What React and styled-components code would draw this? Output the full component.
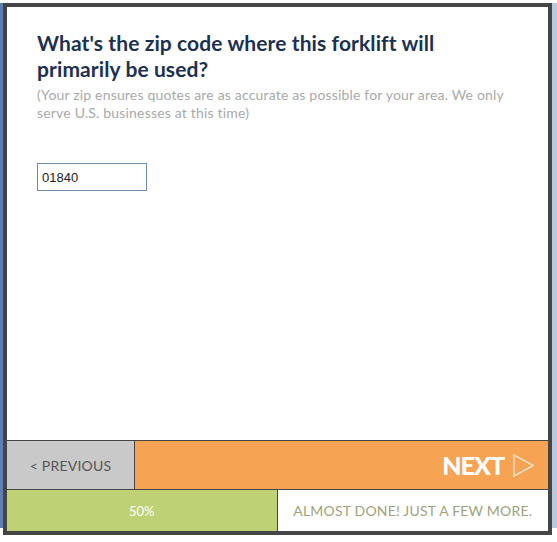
import React from "react";
import styled, { createGlobalStyle } from "styled-components";

const Global = createGlobalStyle`
  html, body { margin: 0; padding: 0; background: #ffffff; }
  body { font-family: "Lato", "Open Sans", sans-serif; }
  * { box-sizing: border-box; }
`;

const Backdrop = styled.div`
  width: 557px;
  height: 542px;
  padding: 3px 5px 7px 3px;
  background:
    linear-gradient(to bottom, #ffffff 0 3px, transparent 3px calc(100% - 14px), #ffffff calc(100% - 14px)),
    linear-gradient(to right, #5d80b0 0 3px, #ffffff 3px calc(100% - 5px), #b9c9de calc(100% - 5px));
`;

const Dialog = styled.div`
  width: 549px;
  height: 532px;
  border: 4px solid #454545;
  background: #ffffff;
  display: flex;
  flex-direction: column;
`;

const Content = styled.div`
  flex: 1;
  padding: 23px 30px 0 30px;
`;

const Title = styled.h1`
  margin: 0;
  max-width: 420px;
  font-family: "Lato", sans-serif;
  font-weight: 700;
  font-size: 21px;
  line-height: 26px;
  letter-spacing: 0.1px;
  color: #1c3152;
`;

const Sub = styled.p`
  margin: 4px 0 0;
  font-family: "Lato", sans-serif;
  font-size: 14px;
  line-height: 18px;
  letter-spacing: 0.18px;
  color: #a9a9a9;
`;

const Input = styled.input`
  display: block;
  margin-top: 41px;
  width: 110px;
  height: 28px;
  border: 1px solid #6d8cae;
  padding: 0 4px;
  font-family: "Liberation Sans", Arial, sans-serif;
  font-size: 13px;
  color: #222;
  outline: none;
`;

const NavRow = styled.div`
  display: flex;
  height: 50px;
  border-top: 1px solid #454545;
  border-bottom: 1px solid #454545;
`;

const PrevButton = styled.button`
  width: 128px;
  border: none;
  border-right: 1px solid #454545;
  background: #c9c9c9;
  color: #555;
  font-family: "Lato", sans-serif;
  font-size: 14px;
  letter-spacing: 0.2px;
  cursor: pointer;
  padding: 0;
`;

const NextButton = styled.button`
  flex: 1;
  border: none;
  background: #f6a354;
  color: #ffffff;
  display: flex;
  align-items: center;
  justify-content: flex-end;
  gap: 9px;
  padding: 0 14px 0 0;
  font-family: "Lato", sans-serif;
  font-weight: 900;
  font-size: 25px;
  letter-spacing: -1px;
  cursor: pointer;
`;

const ProgressRow = styled.div`
  display: flex;
  height: 41px;
`;

const Bar = styled.div`
  background: #bed275;
  border-right: 1px solid #454545;
  color: #ffffff;
  font-family: "Lato", sans-serif;
  font-size: 13px;
  display: flex;
  align-items: center;
  justify-content: center;
`;

const Remaining = styled.div`
  flex: 1;
  color: #9ea37c;
  font-family: "Lato", sans-serif;
  font-size: 14px;
  letter-spacing: 0.2px;
  display: flex;
  align-items: center;
  justify-content: center;
`;

export default function App() {
  const pct = 50;
  return (
    <>
      <Global />
      <Backdrop>
        <Dialog>
          <Content>
            <Title>What's the zip code where this forklift will primarily be used?</Title>
            <Sub>
              (Your zip ensures quotes are as accurate as possible for your area. We only serve U.S.
              businesses at this time)
            </Sub>
            <Input defaultValue="01840" />
          </Content>
          <NavRow>
            <PrevButton>&lt; PREVIOUS</PrevButton>
            <NextButton>
              NEXT
              <svg width="21" height="23" viewBox="0 0 21 23" fill="none">
                <path d="M1 1 L20 11.5 L1 22 Z" stroke="#ffffff" strokeWidth="1.2" strokeLinejoin="miter" opacity="0.85" />
              </svg>
            </NextButton>
          </NavRow>
          <ProgressRow>
            <Bar style={{ width: `${pct}%` }}>{pct}%</Bar>
            <Remaining>ALMOST DONE! JUST A FEW MORE.</Remaining>
          </ProgressRow>
        </Dialog>
      </Backdrop>
    </>
  );
}
